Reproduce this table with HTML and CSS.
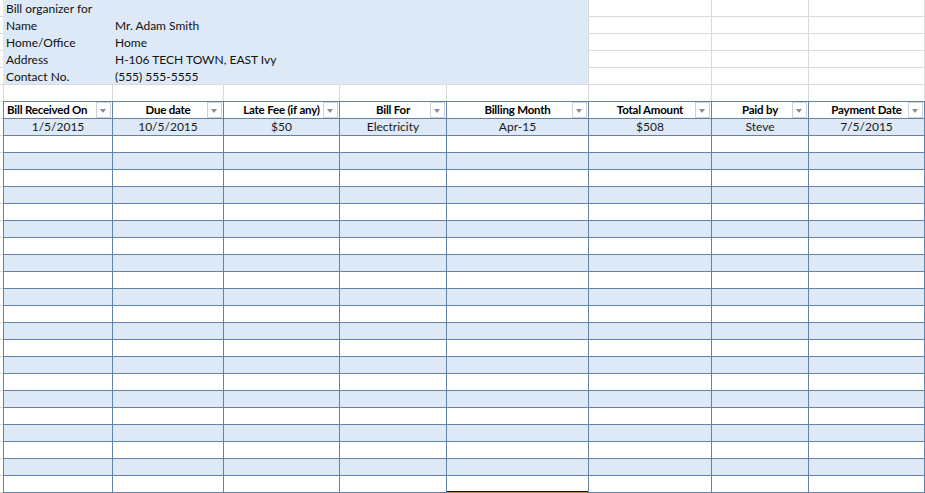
FILE: index.html
```html
<!DOCTYPE html>
<html>
<head>
<meta charset="utf-8">
<link rel="stylesheet" href="styles.css">
</head>
<body>
<div class="sheet">
  <div class="top">
    <div class="info">
      <div class="lbl">Bill organizer for</div><div class="val"></div>
      <div class="lbl">Name</div><div class="val">Mr. Adam Smith</div>
      <div class="lbl">Home/Office</div><div class="val">Home</div>
      <div class="lbl">Address</div><div class="val">H-106 TECH TOWN, EAST Ivy</div>
      <div class="lbl">Contact No.</div><div class="val">(555) 555-5555</div>
    </div>
    <div class="g g-a"></div><div class="g"></div><div class="g"></div><div class="g"></div>
    <div class="g g-a"></div><div class="g"></div><div class="g"></div><div class="g"></div>
    <div class="g g-a"></div><div class="g"></div><div class="g"></div><div class="g"></div>
    <div class="g g-a"></div><div class="g"></div><div class="g"></div><div class="g"></div>
    <div class="g g-a"></div><div class="g"></div><div class="g"></div><div class="g"></div>
    <div class="g g-a"></div><div class="g g-first"></div><div class="g"></div><div class="g"></div><div class="g"></div><div class="g"></div><div class="g"></div><div class="g"></div><div class="g"></div>
  </div>
  <div class="table">
    <div class="th th-left">Bill Received On<span class="dd"></span></div>
    <div class="th">Due date<span class="dd"></span></div>
    <div class="th">Late Fee (if any)<span class="dd"></span></div>
    <div class="th">Bill For<span class="dd"></span></div>
    <div class="th">Billing Month<span class="dd"></span></div>
    <div class="th">Total Amount<span class="dd"></span></div>
    <div class="th">Paid by<span class="dd"></span></div>
    <div class="th">Payment Date<span class="dd"></span></div>

    <div class="td band">1/5/2015</div><div class="td band">10/5/2015</div><div class="td band">$50</div><div class="td band">Electricity</div><div class="td band">Apr-15</div><div class="td band">$508</div><div class="td band">Steve</div><div class="td band">7/5/2015</div>
    <div class="td"></div><div class="td"></div><div class="td"></div><div class="td"></div><div class="td"></div><div class="td"></div><div class="td"></div><div class="td"></div>
    <div class="td band"></div><div class="td band"></div><div class="td band"></div><div class="td band"></div><div class="td band"></div><div class="td band"></div><div class="td band"></div><div class="td band"></div>
    <div class="td"></div><div class="td"></div><div class="td"></div><div class="td"></div><div class="td"></div><div class="td"></div><div class="td"></div><div class="td"></div>
    <div class="td band"></div><div class="td band"></div><div class="td band"></div><div class="td band"></div><div class="td band"></div><div class="td band"></div><div class="td band"></div><div class="td band"></div>
    <div class="td"></div><div class="td"></div><div class="td"></div><div class="td"></div><div class="td"></div><div class="td"></div><div class="td"></div><div class="td"></div>
    <div class="td band"></div><div class="td band"></div><div class="td band"></div><div class="td band"></div><div class="td band"></div><div class="td band"></div><div class="td band"></div><div class="td band"></div>
    <div class="td"></div><div class="td"></div><div class="td"></div><div class="td"></div><div class="td"></div><div class="td"></div><div class="td"></div><div class="td"></div>
    <div class="td band"></div><div class="td band"></div><div class="td band"></div><div class="td band"></div><div class="td band"></div><div class="td band"></div><div class="td band"></div><div class="td band"></div>
    <div class="td"></div><div class="td"></div><div class="td"></div><div class="td"></div><div class="td"></div><div class="td"></div><div class="td"></div><div class="td"></div>
    <div class="td band"></div><div class="td band"></div><div class="td band"></div><div class="td band"></div><div class="td band"></div><div class="td band"></div><div class="td band"></div><div class="td band"></div>
    <div class="td"></div><div class="td"></div><div class="td"></div><div class="td"></div><div class="td"></div><div class="td"></div><div class="td"></div><div class="td"></div>
    <div class="td band"></div><div class="td band"></div><div class="td band"></div><div class="td band"></div><div class="td band"></div><div class="td band"></div><div class="td band"></div><div class="td band"></div>
    <div class="td"></div><div class="td"></div><div class="td"></div><div class="td"></div><div class="td"></div><div class="td"></div><div class="td"></div><div class="td"></div>
    <div class="td band"></div><div class="td band"></div><div class="td band"></div><div class="td band"></div><div class="td band"></div><div class="td band"></div><div class="td band"></div><div class="td band"></div>
    <div class="td"></div><div class="td"></div><div class="td"></div><div class="td"></div><div class="td"></div><div class="td"></div><div class="td"></div><div class="td"></div>
    <div class="td band"></div><div class="td band"></div><div class="td band"></div><div class="td band"></div><div class="td band"></div><div class="td band"></div><div class="td band"></div><div class="td band"></div>
    <div class="td"></div><div class="td"></div><div class="td"></div><div class="td"></div><div class="td"></div><div class="td"></div><div class="td"></div><div class="td"></div>
    <div class="td band"></div><div class="td band"></div><div class="td band"></div><div class="td band"></div><div class="td band"></div><div class="td band"></div><div class="td band"></div><div class="td band"></div>
    <div class="td"></div><div class="td"></div><div class="td"></div><div class="td"></div><div class="td"></div><div class="td"></div><div class="td"></div><div class="td"></div>
    <div class="td band"></div><div class="td band"></div><div class="td band"></div><div class="td band"></div><div class="td band"></div><div class="td band"></div><div class="td band"></div><div class="td band"></div>
    <div class="td"></div><div class="td"></div><div class="td"></div><div class="td"></div><div class="td td-sel"></div><div class="td"></div><div class="td"></div><div class="td"></div>
  </div>
</div>
</body>
</html>
```

FILE: styles.css
```css
html, body {
  margin: 0;
  padding: 0;
}
body {
  width: 925px;
  height: 493px;
  overflow: hidden;
  font-family: Lato, "Liberation Sans", sans-serif;
  font-size: 12px;
  color: #111;
  background: repeating-linear-gradient(to bottom, #fff 0, #fff 16px, #dadada 16px, #dadada 17px);
}
.sheet {
  display: flex;
  flex-direction: column;
}
.top {
  display: grid;
  grid-template-columns: 3px 110px 111px 116px 107px 142px 123px 97px 116px;
  grid-template-rows: 17px 17px 17px 17px 17px 16px;
  height: 101px;
}
.info {
  grid-column: 2 / 7;
  grid-row: 1 / 6;
  margin-bottom: 1px;
  background: #dde9f6;
  border-right: 1px solid #dadada;
  display: grid;
  grid-template-columns: 109px 1fr;
  grid-auto-rows: 17px;
  overflow: hidden;
  line-height: 17px;
}
.lbl, .val {
  padding-left: 3px;
  white-space: nowrap;
}
.g {
  border-right: 1px solid #dadada;
}
.g-a {
  border-right: 0;
}
.g-first {
  border-left: 1px solid #dadada;
}
.table {
  margin-left: 3px;
  width: 922px;
  display: grid;
  grid-template-columns: 108px 110px 115px 106px 141px 122px 96px 115px;
  grid-auto-rows: 16px;
  gap: 1px;
  padding: 1px;
  box-sizing: border-box;
  background: #6282a6;
}
.th {
  position: relative;
  background: #fff;
  font-weight: bold;
  font-size: 11.5px;
  letter-spacing: -0.2px;
  color: #000;
  text-align: center;
  line-height: 16px;
  white-space: nowrap;
}
.th-left {
  text-align: left;
  padding-left: 3px;
}
.dd {
  position: absolute;
  right: 1px;
  top: 0;
  width: 13px;
  height: 14px;
  border: 1px solid #cdd2d8;
  background: #fff;
}
.dd::after {
  content: "";
  position: absolute;
  left: 3px;
  top: 6px;
  border-left: 3.5px solid transparent;
  border-right: 3.5px solid transparent;
  border-top: 4px solid #8c8c8c;
}
.td {
  background: #fff;
  text-align: center;
  line-height: 16px;
  color: #1a1a1a;
  white-space: nowrap;
}
.band {
  background: #dde9f6;
}
.td-sel {
  box-shadow: inset 0 -1px 0 #1a1a1a, 0 1px 0 #b8843f;
}
```
